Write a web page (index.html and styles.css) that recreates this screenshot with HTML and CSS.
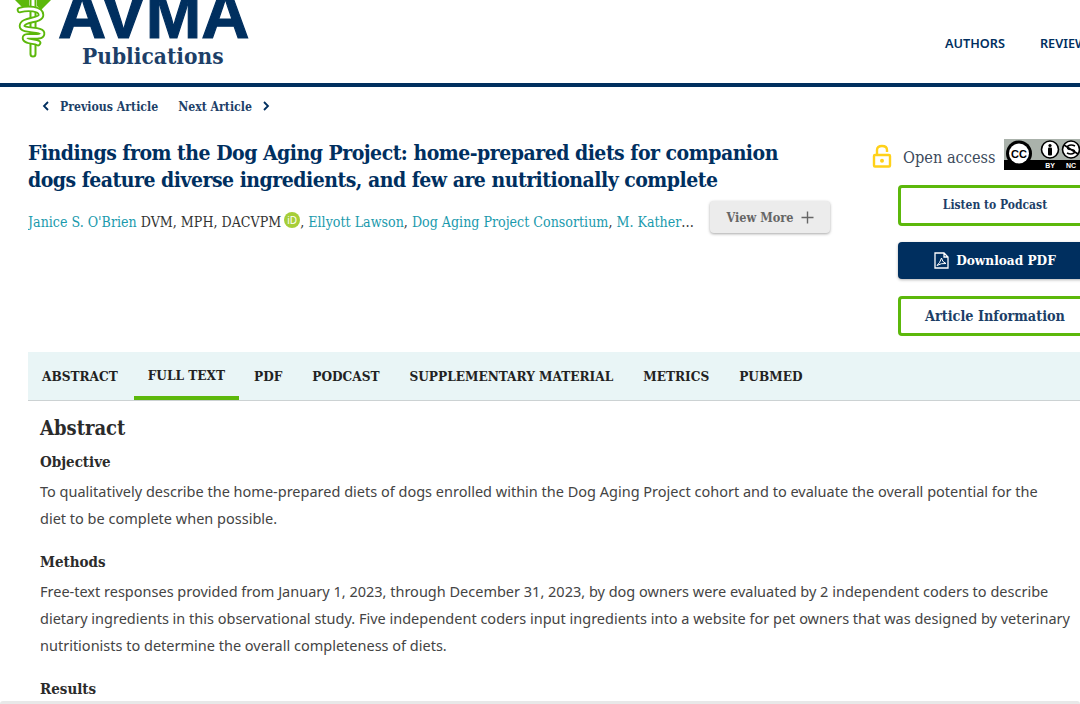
FILE: index.html
```html
<!DOCTYPE html>
<html lang="en">
<head>
    <meta charset="UTF-8">
    <meta name="viewport" content="width=device-width, initial-scale=1.0">
    <title>Findings from the Dog Aging Project</title>
    <link rel="stylesheet" href="styles.css">
</head>
<body>
    <header class="site-header">
        <div class="logo">
            <svg class="logo-mark" width="40" height="58" viewBox="0 0 40 58">
                <path d="M2 0 H16 V6 L12 10 Z M38 0 H24 V6 L28 10 Z" fill="#5cb80b"/>
                <path d="M20 0 V54" stroke="#5cb80b" stroke-width="7" stroke-linecap="round"/>
                <path d="M20 0 V54" stroke="#fff" stroke-width="3" stroke-linecap="round"/>
                <path d="M7 10 C14 8 28 8 28 15 C28 21 9 19 9 26 C9 32 30 28 29 34 C28 39 12 34 12 38 C12 42 22 41 25 43" fill="none" stroke="#5cb80b" stroke-width="6.5" stroke-linecap="round"/>
                <path d="M7 10 C14 8 28 8 28 15 C28 21 9 19 9 26 C9 32 30 28 29 34 C28 39 12 34 12 38 C12 42 22 41 25 43" fill="none" stroke="#fff" stroke-width="2.8" stroke-linecap="round"/>
            </svg>
            <div class="logo-words">
                <div class="logo-avma">AVMA</div>
                <div class="logo-pub">Publications</div>
            </div>
        </div>
        <nav class="top-nav">
            <a href="#">AUTHORS</a>
            <a href="#">REVIEWERS</a>
        </nav>
    </header>

    <div class="article-nav">
        <a href="#"><svg width="8" height="10" viewBox="0 0 8 10"><path d="M6 1 L2 5 L6 9" fill="none" stroke="#002f5f" stroke-width="1.8"/></svg>Previous Article</a>
        <a href="#">Next Article<svg width="8" height="10" viewBox="0 0 8 10"><path d="M2 1 L6 5 L2 9" fill="none" stroke="#002f5f" stroke-width="1.8"/></svg></a>
    </div>

    <main class="page">
        <section class="article-head">
            <div class="head-left">
                <h1>Findings from the Dog Aging Project: home-prepared diets for companion dogs feature diverse ingredients, and few are nutritionally complete</h1>
                <div class="authors-row">
                    <p class="authors"><a href="#">Janice S. O'Brien</a> DVM, MPH, DACVPM <span class="orcid">iD</span>, <a href="#">Ellyott Lawson</a>, <a href="#">Dog Aging Project Consortium</a>, <a href="#">M. Katherine Tolbert</a></p>
                    <button class="view-more">View More <svg width="13" height="13" viewBox="0 0 13 13"><path d="M6.5 0.5 V12.5 M0.5 6.5 H12.5" stroke="#666" stroke-width="1.4"/></svg></button>
                </div>
            </div>
            <aside class="head-right">
                <div class="access">
                    <svg class="lock" width="20" height="24" viewBox="0 0 20 24">
                        <path d="M5 11 V6 Q5 2 10 2 Q15 2 15 6 V8" fill="none" stroke="#ffd11a" stroke-width="2.4"/>
                        <rect x="2" y="11" width="16" height="11.5" rx="1" fill="none" stroke="#ffd11a" stroke-width="2.4"/>
                        <circle cx="10" cy="16.8" r="2" fill="#ffd11a"/>
                    </svg>
                    <span class="access-label">Open access</span>
                    <svg class="cc-badge" width="88" height="31" viewBox="0 0 88 31">
                        <rect width="88" height="31" fill="#aab2ab"/>
                        <rect y="21" width="88" height="10" fill="#000"/>
                        <circle cx="15" cy="14.5" r="13" fill="#000"/>
                        <circle cx="15" cy="14.5" r="10" fill="#fff"/>
                        <text x="15" y="18.5" class="cc-mark">CC</text>
                        <circle cx="46" cy="10.5" r="8.5" fill="#fff" stroke="#000" stroke-width="1.6"/>
                        <circle cx="46" cy="6.5" r="1.6" fill="#000"/>
                        <rect x="44" y="8.5" width="4" height="8" rx="1" fill="#000"/>
                        <circle cx="67" cy="10.5" r="8.5" fill="#fff" stroke="#000" stroke-width="1.6"/>
                        <path d="M71 7 Q67 5 64 7 Q62 10 67 10.5 Q72 11 70 14 Q67 16 63 14 M60 6 L74 15" fill="none" stroke="#000" stroke-width="1.6"/>
                        <text x="46" y="29" class="cc-small">BY</text>
                        <text x="67" y="29" class="cc-small">NC</text>
                    </svg>
                </div>
                <a class="btn btn-outline btn-small" href="#">Listen to Podcast</a>
                <a class="btn btn-solid" href="#">
                    <svg width="15" height="17" viewBox="0 0 15 17"><path d="M1 1 H10 L14 5 V16 H1 Z M10 1 V5 H14" fill="none" stroke="#fff" stroke-width="1.3"/><path d="M3 13.5 Q6 11 7.5 6 Q8 10 12 11.5 Q7 11 3 13.5 Z" fill="none" stroke="#fff"/></svg>
                    Download PDF
                </a>
                <a class="btn btn-outline" href="#">Article Information</a>
            </aside>
        </section>

        <nav class="tabs">
            <a href="#">ABSTRACT</a>
            <a href="#" class="active">FULL TEXT</a>
            <a href="#">PDF</a>
            <a href="#">PODCAST</a>
            <a href="#">SUPPLEMENTARY MATERIAL</a>
            <a href="#">METRICS</a>
            <a href="#">PUBMED</a>
        </nav>

        <article class="abstract">
            <h2>Abstract</h2>
            <h3>Objective</h3>
            <p>To qualitatively describe the home-prepared diets of dogs enrolled within the Dog Aging Project cohort and to evaluate the overall potential for the<br>diet to be complete when possible.</p>
            <h3>Methods</h3>
            <p>Free-text responses provided from January 1, 2023, through December 31, 2023, by dog owners were evaluated by 2 independent coders to describe dietary ingredients in this observational study. Five independent coders input ingredients into a website for pet owners that was designed by veterinary nutritionists to determine the overall completeness of diets.</p>
            <h3>Results</h3>
        </article>
    </main>
    <div class="frame-edge"></div>
</body>
</html>
```
FILE: styles.css
```css
* {
    box-sizing: border-box;
    margin: 0;
    padding: 0;
}

html, body {
    height: 704px;
    overflow: hidden;
}

body {
    position: relative;
    width: 1080px;
    background-color: #fff;
    font-family: "Noto Sans", sans-serif;
    color: #333;
}

a {
    text-decoration: none;
    color: inherit;
}

.site-header {
    display: flex;
    height: 87px;
    border-bottom: 4px solid #002f5f;
    overflow: hidden;
}

.logo {
    display: flex;
    flex: none;
    margin-left: 13px;
    width: 880px;
}

.logo-mark {
    flex: none;
    margin-right: 5px;
}

.logo-avma {
    margin-top: -18px;
    font-family: "Liberation Sans", sans-serif;
    font-size: 66.7px;
    font-weight: 700;
    line-height: 67px;
    color: #002f5f;
    -webkit-text-stroke: 1.2px #002f5f;
}

.logo-pub {
    margin: -6px 0 0 24px;
    font-family: "DejaVu Serif Condensed", "DejaVu Serif", serif;
    font-size: 22.5px;
    font-weight: 700;
    line-height: 26px;
    color: #1d3f68;
    white-space: nowrap;
}

.top-nav {
    display: flex;
    flex: none;
    gap: 35px;
    padding: 35px 0 0 52px;
    font-family: "Noto Sans", sans-serif;
    font-size: 12.7px;
    font-weight: 600;
    line-height: 16px;
    color: #002f5f;
    white-space: nowrap;
}

.article-nav {
    display: flex;
    gap: 20px;
    padding: 4px 0 0 42px;
    height: 36px;
    font-family: "DejaVu Serif Condensed", "DejaVu Serif", serif;
    font-size: 12.2px;
    font-weight: 700;
    line-height: 17px;
    color: #1d3f68;
}

.article-nav a {
    display: flex;
    align-items: center;
    gap: 10px;
}

.article-nav svg {
    margin-bottom: 3px;
}

.page {
    margin-left: 28px;
    width: 1080px;
}

.article-head {
    display: flex;
    height: 229px;
}

.head-left {
    flex: none;
    width: 802px;
    padding-top: 16px;
}

h1 {
    width: 770px;
    font-family: "DejaVu Serif Condensed", "DejaVu Serif", serif;
    font-size: 21px;
    font-weight: 700;
    letter-spacing: -0.5px;
    line-height: 27px;
    color: #002f5f;
}

.authors-row {
    display: flex;
    align-items: flex-start;
    justify-content: space-between;
    margin-top: 8px;
}

.authors {
    width: 670px;
    margin-top: 11px;
    overflow: hidden;
    white-space: nowrap;
    text-overflow: ellipsis;
    font-family: "DejaVu Serif Condensed", "DejaVu Serif", serif;
    font-size: 14.1px;
    line-height: 19px;
    color: #333;
}

.authors a {
    color: #1a9aad;
}

.orcid {
    display: inline-block;
    width: 16px;
    height: 16px;
    border-radius: 50%;
    margin-left: -1px;
    vertical-align: 3px;
    background-color: #a6ce39;
    color: #fff;
    font-family: "Noto Sans", sans-serif;
    font-size: 10px;
    line-height: 16px;
    text-align: center;
}

.view-more {
    display: flex;
    align-items: center;
    justify-content: center;
    gap: 7px;
    width: 120px;
    height: 32px;
    border: none;
    border-radius: 4px;
    background-color: #ececec;
    box-shadow: 0 1px 3px rgba(0, 0, 0, 0.35);
    font-family: "DejaVu Serif Condensed", "DejaVu Serif", serif;
    font-size: 12.6px;
    font-weight: 700;
    color: #666;
}

.head-right {
    display: flex;
    flex-direction: column;
    align-items: flex-start;
    margin-left: 42px;
    padding-top: 16px;
    flex: none;
    width: 260px;
}

.access {
    display: flex;
    align-items: center;
    height: 31px;
    margin-bottom: 15px;
}

.lock {
    margin-top: 3px;
}

.access-label {
    margin: 6px 9px 0 11px;
    font-family: "DejaVu Serif Condensed", "DejaVu Serif", serif;
    font-size: 16.2px;
    color: #3c4a5c;
    white-space: nowrap;
}

.cc-badge {
    flex: none;
}

.cc-mark {
    font-family: "Liberation Sans", sans-serif;
    font-size: 11px;
    font-weight: 700;
    text-anchor: middle;
}

.cc-small {
    fill: #fff;
    font-family: "Liberation Sans", sans-serif;
    font-size: 7px;
    font-weight: 700;
    text-anchor: middle;
}

.btn {
    display: flex;
    align-items: center;
    justify-content: center;
    gap: 7px;
    width: 194px;
    height: 40px;
    margin-left: 26px;
    margin-bottom: 16px;
    border-radius: 4px;
    font-family: "DejaVu Serif Condensed", "DejaVu Serif", serif;
    font-size: 14.3px;
    font-weight: 700;
    white-space: nowrap;
}

.btn-outline {
    border: 3px solid #5cb80b;
    color: #1d3f68;
}

.btn-small {
    height: 41px;
    font-size: 12px;
}

.btn-solid {
    height: 38px;
    margin-bottom: 17px;
    background-color: #002f5f;
    box-shadow: 0 1px 3px rgba(0, 0, 0, 0.3);
    font-size: 13.5px;
    color: #fff;
}

.tabs {
    display: flex;
    height: 49px;
    background-color: #e9f5f6;
    border-bottom: 1px solid #ccd2d3;
    font-family: "DejaVu Serif Condensed", "DejaVu Serif", serif;
    font-size: 13.5px;
    font-weight: 700;
    line-height: 48px;
    color: #222;
}

.tabs a {
    padding: 0 14px 0 16px;
    white-space: nowrap;
}

.tabs a:first-child {
    padding-left: 14px;
}

.tabs a.active {
    height: 48px;
    margin: 0 -1px 0 2px;
    padding: 0 14px;
    line-height: 47px;
    border-bottom: 4px solid #5cb80b;
}

.abstract {
    width: 1045px;
    padding: 14px 0 0 12px;
}

h2 {
    font-family: "DejaVu Serif Condensed", "DejaVu Serif", serif;
    font-size: 20px;
    font-weight: 700;
    line-height: 26px;
    color: #2b2b2b;
}

h3 {
    margin-top: 10px;
    font-family: "DejaVu Serif Condensed", "DejaVu Serif", serif;
    font-size: 15px;
    font-weight: 700;
    line-height: 22px;
    color: #2b2b2b;
}

.abstract p {
    margin: 5px 0 19px;
    font-size: 14.5px;
    line-height: 27px;
    color: #444;
}

.frame-edge {
    position: absolute;
    left: 0;
    right: 0;
    bottom: 0;
    height: 3px;
    background-color: #e8e8e8;
    border-radius: 4px 4px 0 0;
}
```
